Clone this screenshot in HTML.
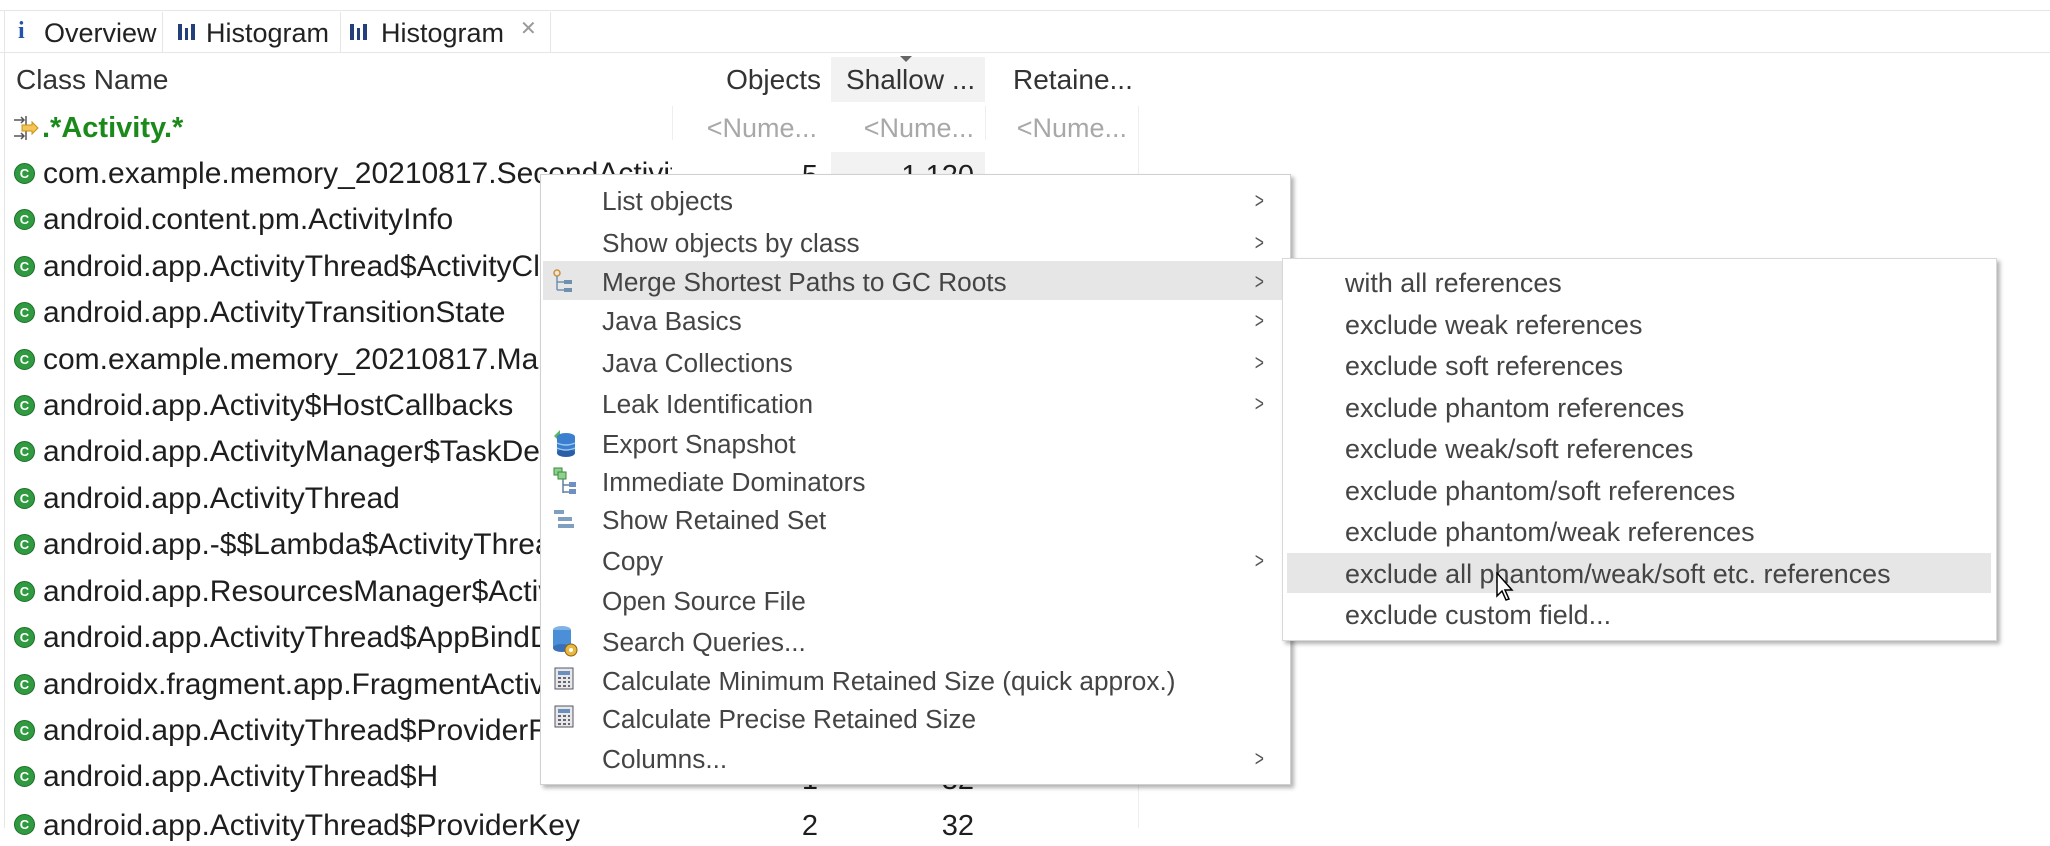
<!DOCTYPE html>
<html><head><meta charset="utf-8"><style>
*{margin:0;padding:0;box-sizing:border-box}
body{width:2050px;height:828px;overflow:hidden;background:#fff;font-family:"Liberation Sans",Arial,sans-serif;position:relative;color:#222}
.a{position:absolute;white-space:nowrap}
.row{position:absolute;left:43px;font-size:30px;height:40px;line-height:40px;color:#1e1e1e}
.ic{position:absolute;left:14px;width:21px;height:21px;border-radius:50%;background:#2f9a3f;border:1px solid #1d6e2a;color:#fff;font-size:13px;font-weight:bold;line-height:19px;text-align:center}
.mi{position:absolute;left:61px;font-size:26.2px;height:40px;line-height:40px;color:#444}
.ar{position:absolute;left:712px;font-size:22px;color:#555;height:40px;line-height:40px;transform:scaleX(.7)}
.si{position:absolute;left:62px;font-size:26.9px;height:40px;line-height:40px;color:#444}
.num{position:absolute;font-size:29px;height:40px;line-height:40px;text-align:right;color:#1e1e1e}
</style></head><body>
<!-- tab bar -->
<div class="a" style="left:0;top:10px;width:2050px;height:1px;background:#e6e6e6"></div>
<div class="a" style="left:0;top:52px;width:2050px;height:1px;background:#e6e6e6"></div>
<div class="a" style="left:4px;top:10px;width:1px;height:818px;background:#e6e6e6"></div>
<div class="a" style="left:162px;top:12px;width:1px;height:40px;background:#e6e6e6"></div>
<div class="a" style="left:340px;top:12px;width:1px;height:40px;background:#e6e6e6"></div>
<div class="a" style="left:550px;top:12px;width:1px;height:40px;background:#e6e6e6"></div>
<div class="a" style="left:18px;top:14px;font:bold 24px 'Liberation Serif',serif;color:#2255aa;line-height:34px">i</div>
<div class="a" style="left:44px;top:15px;font-size:27px;line-height:36px;color:#222">Overview</div>
<svg class="a" style="left:177px;top:22px" width="20" height="20"><rect x="1" y="2" width="4" height="16" fill="#24407a"/><rect x="8" y="6" width="3" height="12" fill="#24407a"/><rect x="14" y="2" width="4" height="16" fill="#24407a"/></svg>
<div class="a" style="left:206px;top:15px;font-size:27px;line-height:36px;color:#222">Histogram</div>
<svg class="a" style="left:349px;top:22px" width="20" height="20"><rect x="1" y="2" width="4" height="16" fill="#24407a"/><rect x="8" y="6" width="3" height="12" fill="#24407a"/><rect x="14" y="2" width="4" height="16" fill="#24407a"/></svg>
<div class="a" style="left:381px;top:15px;font-size:27px;line-height:36px;color:#222">Histogram</div>
<div class="a" style="left:520px;top:16px;font-size:20px;color:#999">✕</div>
<!-- header -->
<div class="a" style="left:831px;top:57px;width:154px;height:45px;background:#f2f2f2"></div>
<div class="a" style="left:831px;top:152px;width:154px;height:46px;background:#f2f2f2"></div>
<div class="a" style="left:16px;top:60px;font-size:28px;line-height:40px;color:#333">Class Name</div>
<div class="a" style="left:700px;top:60px;width:121px;text-align:right;font-size:28px;line-height:40px;color:#333">Objects</div>
<div class="a" style="left:846px;top:60px;font-size:28px;line-height:40px;color:#333">Shallow ...</div>
<div class="a" style="left:1013px;top:60px;font-size:28px;line-height:40px;color:#333">Retaine...</div>
<svg class="a" style="left:900px;top:56px" width="12" height="8"><path d="M0 0H12L6 6Z" fill="#666"/></svg>
<div class="a" style="left:672px;top:106px;width:1px;height:722px;background:#eee"></div>
<div class="a" style="left:985px;top:106px;width:1px;height:722px;background:#eee"></div>
<div class="a" style="left:1138px;top:106px;width:1px;height:722px;background:#eee"></div>
<!-- filter row -->
<svg class="a" style="left:12px;top:114px" width="28" height="28"><path d="M2 6H12M9 3L12 6L9 9M2 22H12M9 19L12 22L9 25" stroke="#555" fill="none" stroke-width="1.5"/><path d="M14 2V26" stroke="#555" stroke-width="1.5"/><path d="M10 11H20V8L26 14L20 20V17H10Z" fill="#f4c455" stroke="#c8901a"/></svg>
<div class="a" style="left:42px;top:108px;font-size:29px;font-weight:bold;line-height:40px;color:#1b8a1b">.*Activity.*</div>
<div class="a" style="left:680px;top:108px;width:137px;text-align:right;font-size:27px;line-height:40px;color:#a8a8a8">&lt;Nume...</div>
<div class="a" style="left:837px;top:108px;width:137px;text-align:right;font-size:27px;line-height:40px;color:#a8a8a8">&lt;Nume...</div>
<div class="a" style="left:990px;top:108px;width:137px;text-align:right;font-size:27px;line-height:40px;color:#a8a8a8">&lt;Nume...</div>
<!-- rows -->
<div class="ic" style="top:163px">C</div><div class="row" style="top:154px">com.example.memory_20210817.SecondActivity</div>
<div class="ic" style="top:209px">C</div><div class="row" style="top:200px">android.content.pm.ActivityInfo</div>
<div class="ic" style="top:256px">C</div><div class="row" style="top:247px">android.app.ActivityThread$ActivityClientRecord</div>
<div class="ic" style="top:302px">C</div><div class="row" style="top:293px">android.app.ActivityTransitionState</div>
<div class="ic" style="top:349px">C</div><div class="row" style="top:340px">com.example.memory_20210817.MainActivity</div>
<div class="ic" style="top:395px">C</div><div class="row" style="top:386px">android.app.Activity$HostCallbacks</div>
<div class="ic" style="top:441px">C</div><div class="row" style="top:432px">android.app.ActivityManager$TaskDescription</div>
<div class="ic" style="top:488px">C</div><div class="row" style="top:479px">android.app.ActivityThread</div>
<div class="ic" style="top:534px">C</div><div class="row" style="top:525px">android.app.-$$Lambda$ActivityThread$A</div>
<div class="ic" style="top:581px">C</div><div class="row" style="top:572px">android.app.ResourcesManager$ActivityResources</div>
<div class="ic" style="top:627px">C</div><div class="row" style="top:618px">android.app.ActivityThread$AppBindData</div>
<div class="ic" style="top:674px">C</div><div class="row" style="top:665px">androidx.fragment.app.FragmentActivity</div>
<div class="ic" style="top:720px">C</div><div class="row" style="top:711px">android.app.ActivityThread$ProviderRecord</div>
<div class="ic" style="top:766px">C</div><div class="row" style="top:757px">android.app.ActivityThread$H</div>
<div class="ic" style="top:814px">C</div><div class="row" style="top:806px">android.app.ActivityThread$ProviderKey</div>
<div class="a" style="left:672px;top:140px;width:159px;height:688px;background:#fff"></div>
<div class="a" style="left:985px;top:140px;width:153px;height:688px;background:#fff"></div>
<div class="num" style="left:700px;top:156px;width:118px">5</div>
<div class="num" style="left:840px;top:156px;width:134px">1,120</div>
<div class="num" style="left:700px;top:760px;width:118px">1</div>
<div class="num" style="left:840px;top:760px;width:134px">32</div>
<div class="num" style="left:700px;top:806px;width:118px">2</div>
<div class="num" style="left:840px;top:806px;width:134px">32</div>
<!-- context menu -->
<div class="a" style="left:540px;top:174px;width:751px;height:611px;background:#fff;border:1px solid #d0d0d0;box-shadow:3px 3px 4px rgba(0,0,0,.3)">
<div class="a" style="left:2px;top:86px;width:739px;height:39px;background:#e6e6e6"></div>
<div class="mi" style="top:6px">List objects</div><div class="ar" style="top:6px">&gt;</div>
<div class="mi" style="top:48px">Show objects by class</div><div class="ar" style="top:48px">&gt;</div>
<div class="mi" style="top:87px">Merge Shortest Paths to GC Roots</div><div class="ar" style="top:87px">&gt;</div>
<div class="mi" style="top:126px">Java Basics</div><div class="ar" style="top:126px">&gt;</div>
<div class="mi" style="top:168px">Java Collections</div><div class="ar" style="top:168px">&gt;</div>
<div class="mi" style="top:209px">Leak Identification</div><div class="ar" style="top:209px">&gt;</div>
<div class="mi" style="top:249px">Export Snapshot</div>
<div class="mi" style="top:287px">Immediate Dominators</div>
<div class="mi" style="top:325px">Show Retained Set</div>
<div class="mi" style="top:366px">Copy</div><div class="ar" style="top:366px">&gt;</div>
<div class="mi" style="top:406px">Open Source File</div>
<div class="mi" style="top:447px">Search Queries...</div>
<div class="mi" style="top:486px">Calculate Minimum Retained Size (quick approx.)</div>
<div class="mi" style="top:524px">Calculate Precise Retained Size</div>
<div class="mi" style="top:564px">Columns...</div><div class="ar" style="top:564px">&gt;</div>
<svg class="a" style="left:11px;top:94px" width="24" height="26"><circle cx="5" cy="4" r="3" fill="none" stroke="#d09030" stroke-width="1.5"/><path d="M5 7V21M5 13H12M5 21H12" stroke="#7090b0" stroke-width="1.5" fill="none"/><rect x="12" y="11" width="8" height="4" fill="#7090b0"/><rect x="12" y="19" width="8" height="4" fill="#7090b0"/></svg>
<svg class="a" style="left:10px;top:253px" width="26" height="30"><path d="M3 8 L9 2 L9 6 L16 6 L16 10 L9 10 L9 14Z" fill="#5cb85c"/><ellipse cx="15" cy="9" rx="9" ry="4" fill="#3a7fd0"/><rect x="6" y="9" width="18" height="16" fill="#3a7fd0"/><ellipse cx="15" cy="25" rx="9" ry="4" fill="#2a5fa8"/><path d="M6 15Q15 19 24 15M6 20Q15 24 24 20" stroke="#9cc8f0" fill="none" stroke-width="1.5"/></svg>
<svg class="a" style="left:12px;top:292px" width="26" height="30"><rect x="1" y="1" width="8" height="7" fill="#8fd08f" stroke="#3a8a3a"/><rect x="5" y="5" width="8" height="7" fill="#8fd08f" stroke="#3a8a3a"/><path d="M10 12V26M10 18H16M10 25H16" stroke="#6080a0" fill="none" stroke-width="1.5"/><rect x="16" y="15" width="7" height="5" fill="#6f90c0"/><rect x="16" y="22" width="7" height="5" fill="#6f90c0"/></svg>
<svg class="a" style="left:12px;top:333px" width="26" height="24"><rect x="1" y="2" width="10" height="4" fill="#7f9fc0"/><rect x="5" y="9" width="14" height="4" fill="#7f9fc0"/><rect x="5" y="16" width="16" height="4" fill="#7f9fc0"/></svg>
<svg class="a" style="left:10px;top:450px" width="28" height="34"><ellipse cx="11" cy="5" rx="9" ry="4" fill="#7fb3e8"/><rect x="2" y="5" width="18" height="18" fill="#4a8fd8"/><ellipse cx="11" cy="23" rx="9" ry="4" fill="#3a70b8"/><circle cx="20" cy="25" r="6" fill="#e8b840" stroke="#906010"/><circle cx="20" cy="25" r="2" fill="#fff"/></svg>
<svg class="a" style="left:13px;top:492px" width="22" height="24"><rect x="1" y="1" width="18" height="21" fill="#e8e8e8" stroke="#556"/><rect x="4" y="4" width="12" height="4" fill="#6a8fbf"/><path d="M4 11h3M9 11h3M14 11h2M4 15h3M9 15h3M14 15h2M4 19h3M9 19h3M14 19h2" stroke="#667" stroke-width="2"/></svg>
<svg class="a" style="left:13px;top:530px" width="22" height="24"><rect x="1" y="1" width="18" height="21" fill="#e8e8e8" stroke="#556"/><rect x="4" y="4" width="12" height="4" fill="#6a8fbf"/><path d="M4 11h3M9 11h3M14 11h2M4 15h3M9 15h3M14 15h2M4 19h3M9 19h3M14 19h2" stroke="#667" stroke-width="2"/></svg>
</div>
<!-- submenu -->
<div class="a" style="left:1282px;top:258px;width:715px;height:383px;background:#fff;border:1px solid #d8d8d8;box-shadow:3px 3px 4px rgba(0,0,0,.3)">
<div class="a" style="left:4px;top:294px;width:704px;height:40px;background:#e6e6e6"></div>
<div class="si" style="top:4px">with all references</div>
<div class="si" style="top:46px">exclude weak references</div>
<div class="si" style="top:87px">exclude soft references</div>
<div class="si" style="top:129px">exclude phantom references</div>
<div class="si" style="top:170px">exclude weak/soft references</div>
<div class="si" style="top:212px">exclude phantom/soft references</div>
<div class="si" style="top:253px">exclude phantom/weak references</div>
<div class="si" style="top:295px">exclude all phantom/weak/soft etc. references</div>
<div class="si" style="top:336px">exclude custom field...</div>
<svg class="a" style="left:212px;top:313px" width="20" height="30"><path d="M2 1V24L7 19L11 28L14 27L10 18H17Z" fill="#fff" stroke="#000" stroke-width="1.5"/></svg>
</div>
</body></html>
